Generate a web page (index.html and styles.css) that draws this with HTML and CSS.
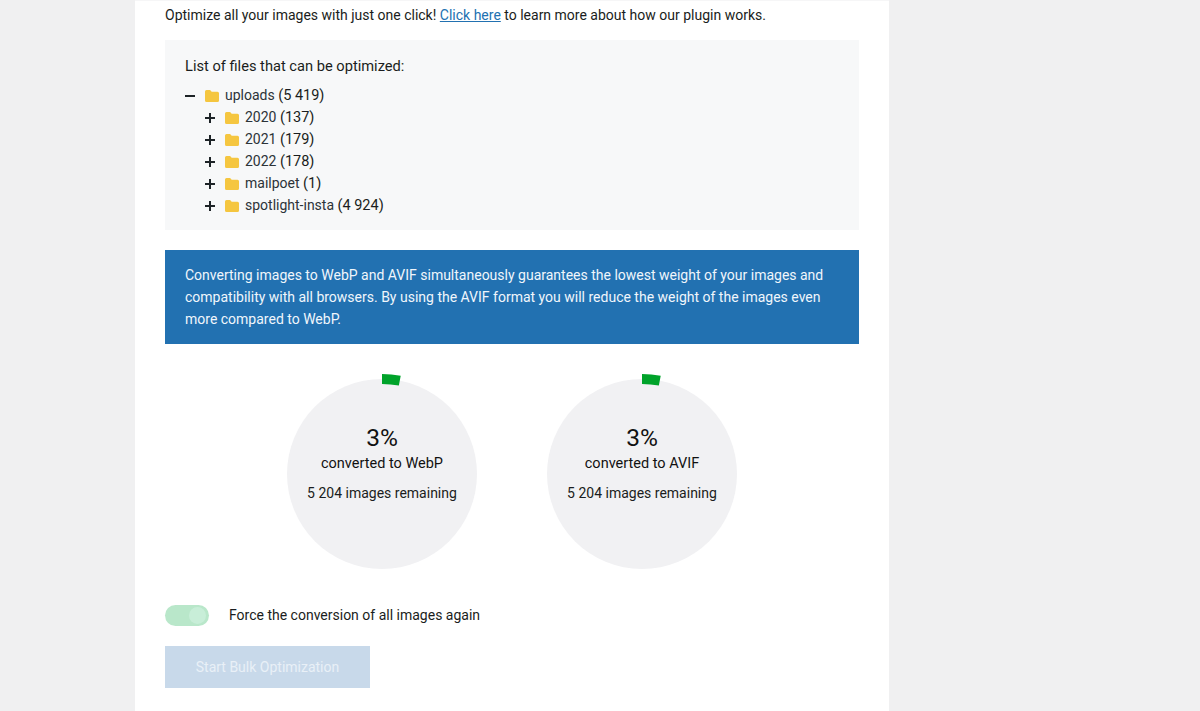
FILE: index.html
```html
<!DOCTYPE html>
<html lang="en">
<head>
    <meta charset="UTF-8">
    <title>Bulk Optimization</title>
    <link rel="stylesheet" href="styles.css">
</head>
<body>
    <div class="container">
        <p class="intro">Optimize all your images with just one click! <a href="#">Click here</a> to learn more about how our plugin works.</p>

        <div class="files-box">
            <div class="files-title">List of files that can be optimized:</div>
            <ul class="tree">
                <li class="tree-row">
                    <span class="tree-toggle minus"></span>
                    <svg class="folder" viewBox="0 0 14 12"><path d="M1.5 0h3.6l1.6 1.8h5.8A1.5 1.5 0 0 1 14 3.3v7.2a1.5 1.5 0 0 1-1.500 1.500h-11A1.500 1.500 0 0 1 0 10.500v-9A1.500 1.500 0 0 1 1.500 0z"/></svg>
                    <span class="tree-name">uploads <span class="tree-count">(5 419)</span></span>
                </li>
                <li>
                    <ul class="tree sub">
                        <li class="tree-row">
                            <span class="tree-toggle plus"></span>
                            <svg class="folder" viewBox="0 0 14 12"><path d="M1.5 0h3.6l1.6 1.8h5.8A1.5 1.5 0 0 1 14 3.3v7.2a1.5 1.5 0 0 1-1.500 1.500h-11A1.500 1.500 0 0 1 0 10.500v-9A1.500 1.500 0 0 1 1.500 0z"/></svg>
                            <span class="tree-name">2020 <span class="tree-count">(137)</span></span>
                        </li>
                        <li class="tree-row">
                            <span class="tree-toggle plus"></span>
                            <svg class="folder" viewBox="0 0 14 12"><path d="M1.5 0h3.6l1.6 1.8h5.8A1.5 1.5 0 0 1 14 3.3v7.2a1.5 1.5 0 0 1-1.500 1.500h-11A1.500 1.500 0 0 1 0 10.500v-9A1.500 1.500 0 0 1 1.500 0z"/></svg>
                            <span class="tree-name">2021 <span class="tree-count">(179)</span></span>
                        </li>
                        <li class="tree-row">
                            <span class="tree-toggle plus"></span>
                            <svg class="folder" viewBox="0 0 14 12"><path d="M1.5 0h3.6l1.6 1.8h5.8A1.5 1.5 0 0 1 14 3.3v7.2a1.5 1.5 0 0 1-1.500 1.500h-11A1.500 1.500 0 0 1 0 10.500v-9A1.500 1.500 0 0 1 1.500 0z"/></svg>
                            <span class="tree-name">2022 <span class="tree-count">(178)</span></span>
                        </li>
                        <li class="tree-row">
                            <span class="tree-toggle plus"></span>
                            <svg class="folder" viewBox="0 0 14 12"><path d="M1.5 0h3.6l1.6 1.8h5.8A1.5 1.5 0 0 1 14 3.3v7.2a1.5 1.5 0 0 1-1.500 1.500h-11A1.500 1.500 0 0 1 0 10.500v-9A1.500 1.500 0 0 1 1.500 0z"/></svg>
                            <span class="tree-name">mailpoet <span class="tree-count">(1)</span></span>
                        </li>
                        <li class="tree-row">
                            <span class="tree-toggle plus"></span>
                            <svg class="folder" viewBox="0 0 14 12"><path d="M1.5 0h3.6l1.6 1.8h5.8A1.5 1.5 0 0 1 14 3.3v7.2a1.5 1.5 0 0 1-1.500 1.500h-11A1.500 1.500 0 0 1 0 10.500v-9A1.500 1.500 0 0 1 1.500 0z"/></svg>
                            <span class="tree-name">spotlight-insta <span class="tree-count">(4 924)</span></span>
                        </li>
                    </ul>
                </li>
            </ul>
        </div>

        <div class="notice">Converting images to WebP and AVIF simultaneously guarantees the lowest weight of your images and compatibility with all browsers. By using the AVIF format you will reduce the weight of the images even more compared to WebP.</div>

        <div class="charts">
            <div class="chart">
                <svg class="chart-ring" viewBox="0 0 200 200">
                    <circle cx="100" cy="100" r="95" pathLength="100" stroke-dasharray="3 97" transform="rotate(-90 100 100)"/>
                </svg>
                <div class="chart-inner">
                    <div class="chart-percent">3%</div>
                    <div class="chart-label">converted to WebP</div>
                    <div class="chart-remaining">5 204 images remaining</div>
                </div>
            </div>
            <div class="chart">
                <svg class="chart-ring" viewBox="0 0 200 200">
                    <circle cx="100" cy="100" r="95" pathLength="100" stroke-dasharray="3 97" transform="rotate(-90 100 100)"/>
                </svg>
                <div class="chart-inner">
                    <div class="chart-percent">3%</div>
                    <div class="chart-label">converted to AVIF</div>
                    <div class="chart-remaining">5 204 images remaining</div>
                </div>
            </div>
        </div>

        <div class="force-row">
            <span class="switch"><span class="switch-knob"></span></span>
            <span class="force-label">Force the conversion of all images again</span>
        </div>

        <button class="start-button" disabled>Start Bulk Optimization</button>
    </div>
</body>
</html>
```

FILE: styles.css
```css
* {
    margin: 0;
    padding: 0;
    box-sizing: border-box;
}

body {
    background-color: #f0f0f1;
    font-family: Roboto, sans-serif;
    font-size: 14px;
    line-height: 22px;
    color: #1a1d20;
    height: 711px;
    overflow: hidden;
}

.container {
    width: 754px;
    height: 711px;
    margin-left: 135px;
    padding: 3px 30px 0;
    background-color: white;
    border-top: 1px solid #f6f6f7;
}

.intro {
    margin-bottom: 14px;
}

.intro a {
    color: #2271b1;
}

.files-box {
    background-color: #f7f8f9;
    padding: 15px 20px 14px;
    margin-bottom: 20px;
}

.files-title {
    font-size: 14.650px;
    margin-bottom: 7px;
}

.tree {
    list-style: none;
}

.tree.sub {
    margin-left: 20px;
}

.tree-row {
    display: flex;
    align-items: center;
    height: 22px;
}

.tree-toggle {
    width: 20px;
    height: 22px;
    position: relative;
    flex-shrink: 0;
}

.tree-toggle:before {
    content: "";
    position: absolute;
    left: 0;
    top: 11px;
    width: 10px;
    height: 1.5px;
    background-color: #1d2327;
}

.tree-toggle.plus:after {
    content: "";
    position: absolute;
    left: 4.25px;
    top: 6.500px;
    width: 1.5px;
    height: 10px;
    background-color: #1d2327;
}

.folder {
    width: 14px;
    height: 12px;
    margin-right: 6px;
    margin-top: 2px;
    flex-shrink: 0;
    fill: #f5c640;
}

.tree-name {
    color: #2c3338;
}

.tree-count {
    font-size: 14.500px;
    color: #1a1d20;
}

.notice {
    background-color: #2271b1;
    color: #f0f6fc;
    padding: 14px 20px;
    margin-bottom: 30px;
}

.charts {
    display: flex;
    justify-content: center;
    gap: 60px;
    margin-bottom: 31px;
}

.chart {
    width: 200px;
    height: 200px;
    padding: 5px;
    position: relative;
}

.chart-ring {
    position: absolute;
    left: 0;
    top: 0;
    width: 200px;
    height: 200px;
    fill: none;
    stroke: #00a32a;
    stroke-width: 10;
}

.chart-inner {
    width: 190px;
    height: 190px;
    border-radius: 50%;
    background-color: #f1f1f3;
    padding-top: 44px;
    text-align: center;
}

.chart-percent {
    font-size: 24.500px;
    line-height: 30px;
    color: #111;
}

.chart-label {
    font-size: 14.500px;
    line-height: 22px;
    color: #111;
}

.chart-remaining {
    margin-top: 7px;
}

.force-row {
    display: flex;
    align-items: center;
    height: 22px;
    margin-bottom: 19px;
}

.switch {
    display: block;
    width: 44px;
    height: 21px;
    border-radius: 11px;
    background-color: #b9e7ca;
    padding: 2px;
    margin-top: -1px;
    margin-right: 20px;
}

.switch-knob {
    display: block;
    width: 17px;
    height: 17px;
    margin-left: 22px;
    border-radius: 50%;
    background-color: #c8eed8;
}

.force-label {
    margin-top: -2px;
}

.start-button {
    display: block;
    width: 205px;
    height: 42px;
    background-color: #c8d9ea;
    color: #e9f0f7;
    border: none;
    font-family: Roboto, sans-serif;
    font-size: 14px;
}
```
